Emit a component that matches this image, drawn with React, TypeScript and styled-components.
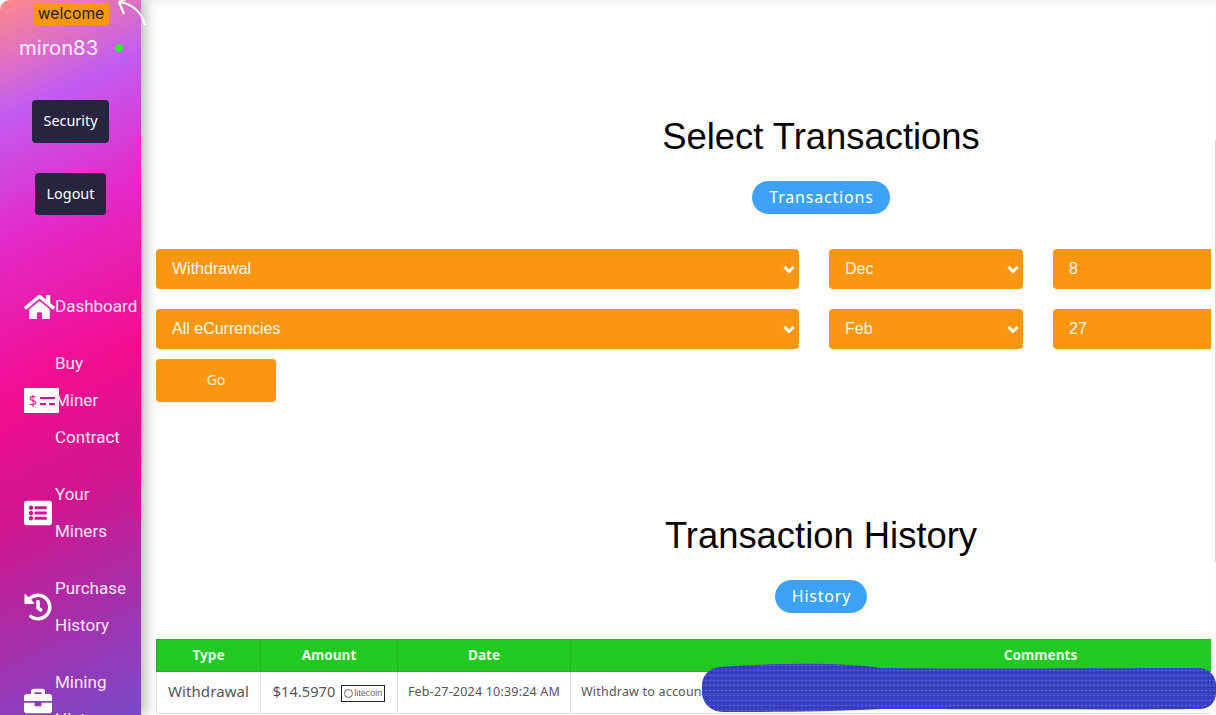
import React from "react";
import styled, { createGlobalStyle } from "styled-components";
import { FaHome, FaListAlt, FaHistory, FaBriefcase } from "react-icons/fa";

const Global = createGlobalStyle`
  html, body {
    margin: 0;
    height: 100%;
    overflow: hidden;
    background: #fff;
  }
  * {
    box-sizing: border-box;
  }
`;

const Page = styled.div`
  position: relative;
  display: flex;
  width: 1216px;
  height: 715px;
  overflow: hidden;
`;

const Sidebar = styled.aside`
  position: relative;
  flex: 0 0 141px;
  height: 715px;
  overflow: hidden;
  border-radius: 10px 0 0 0;
  background: linear-gradient(155deg, #ff8a8a 0%, #c25cf0 15%, #e32ac8 31%, #f20d90 52%, #d0168f 68%, #7a4ac8 100%);
  box-shadow: 4px 0 14px rgba(0, 0, 0, 0.3);
  z-index: 1;
`;

const BackArrow = styled.svg`
  position: absolute;
  left: 116px;
  top: 0;
  z-index: 3;
`;

const Welcome = styled.div`
  width: 76px;
  height: 22px;
  margin: 3px 0 0 33px;
  background: #fb9611;
  border-radius: 2px;
  color: #222;
  font: 15.6px/21px "Inter", sans-serif;
  text-align: center;
`;

const UserRow = styled.div`
  display: flex;
  align-items: center;
  margin: 10px 0 0 19px;
  height: 26px;
  color: #fdeefd;
  font: 20.3px/26px "Inter", sans-serif;
`;

const OnlineDot = styled.span`
  width: 8px;
  height: 8px;
  margin-left: 17px;
  border-radius: 50%;
  background: #2df03a;
`;

const DarkButton = styled.button<{ $w: number; $h: number; $top: number; $lift: number }>`
  display: block;
  width: ${(p) => p.$w}px;
  height: ${(p) => p.$h}px;
  margin: ${(p) => p.$top}px auto 0;
  padding: 0 0 ${(p) => p.$lift}px;
  border: 0;
  border-radius: 4px;
  background: #27243f;
  color: #fff;
  font: 14.4px "Noto Sans", sans-serif;
`;

const Nav = styled.nav`
  display: flex;
  flex-direction: column;
  gap: 20px;
  margin-top: 73px;
  padding-left: 24px;
`;

const NavItem = styled.div`
  display: flex;
  align-items: center;
  color: #fde4f8;
`;

const NavIcon = styled.div`
  flex: 0 0 31px;
  width: 31px;
  display: flex;
  color: #fff;
`;

const NavLabel = styled.div`
  width: 72px;
  font: 17px/37px "Roboto", sans-serif;
`;

const Main = styled.main`
  flex: 1;
  min-width: 0;
  padding: 0 5px 0 15px;
  box-shadow: inset 0 8px 8px -8px rgba(120, 130, 160, 0.22);
`;

const Clip = styled.div`
  width: 1055px;
  height: 715px;
  overflow: hidden;
`;

const Content = styled.div`
  width: 1355px;
`;

const Section = styled.section<{ $top: number }>`
  display: flex;
  flex-direction: column;
  align-items: center;
  width: 1330px;
  margin-top: ${(p) => p.$top}px;
`;

const Title = styled.h2`
  margin: 0;
  color: #000;
  font: 400 36.4px/42px "Liberation Sans", sans-serif;
`;

const Pill = styled.span`
  margin-top: 23px;
  padding: 0 16px 0 17px;
  height: 33px;
  border-radius: 17px;
  background: #3da2f6;
  color: #fff;
  font: 16px/33px "Noto Sans", sans-serif;
  letter-spacing: 0.8px;
`;

const Filters = styled.div`
  display: grid;
  grid-template-columns: 643px 194px 300px;
  gap: 20px 30px;
  margin-top: 35px;
`;

const FilterBox = styled.div`
  position: relative;
  height: 40px;
  padding-left: 16px;
  border-radius: 4px;
  background: #fb9611;
  color: #fff6e6;
  font: 16px/40px "Liberation Sans", sans-serif;
`;

const Chevron = styled.svg`
  position: absolute;
  right: 4px;
  top: 16px;
`;

const GoButton = styled.button`
  display: block;
  width: 120px;
  height: 43px;
  margin-top: 10px;
  padding: 0 0 2px;
  border: 0;
  border-radius: 4px;
  background: #fb9611;
  color: #fff3d8;
  font: 14px "Noto Sans", sans-serif;
`;

const Table = styled.table`
  width: 1355px;
  margin-top: 26px;
  border-collapse: collapse;
  table-layout: fixed;
  font-family: "Noto Sans", sans-serif;
`;

const Th = styled.th`
  height: 32px;
  padding: 0 0 2px;
  background: #22c922;
  border: 1px solid #1fb51f;
  color: #e8fbe4;
  font-size: 13.6px;
  font-weight: 700;
`;

const Td = styled.td<{ $size: number; $left?: boolean }>`
  height: 42px;
  padding: 0 0 ${(p) => (p.$size === 15 ? 4 : 2)}px ${(p) => (p.$left ? 10 : 0)}px;
  border: 1px solid #e2e2e2;
  color: #555;
  font-size: ${(p) => p.$size}px;
  letter-spacing: ${(p) => (p.$size < 14 ? 0.2 : 0.1)}px;
  text-align: ${(p) => (p.$left ? "left" : "center")};
  white-space: nowrap;
  overflow: hidden;
`;

const CoinBadge = styled.span`
  display: inline-flex;
  align-items: center;
  justify-content: center;
  gap: 1px;
  width: 44px;
  height: 17px;
  margin-left: 6px;
  border: 1px solid #222;
  color: #666;
  font: 9px/15px "Liberation Sans", sans-serif;
  letter-spacing: 0;
  vertical-align: middle;
`;

const CoinRing = styled.span`
  width: 9px;
  height: 9px;
  border: 1px solid #666;
  border-radius: 50%;
`;

const Scribble = styled.svg`
  position: absolute;
  left: 701px;
  top: 663px;
  z-index: 2;
`;

const EdgeLine = styled.div`
  position: absolute;
  right: 0;
  top: 140px;
  width: 1px;
  height: 422px;
  background: #d4d4d4;
`;

const Chev = () => (
  <Chevron width="12" height="9" viewBox="0 0 12 9">
    <path d="M1.5 2 L6 6.5 L10.5 2" fill="none" stroke="#fff" strokeWidth="3" />
  </Chevron>
);

const PaymentIcon = () => (
  <svg width="35" height="25" viewBox="0 0 35 25" style={{ flex: "none" }}>
    <rect width="35" height="25" rx="1" fill="#fff" />
    <text x="5" y="18" fontFamily="Noto Sans" fontSize="14" fill="#d0158f">$</text>
    <path d="M16 10h15M16 16h6M25 16h6" stroke="#d0158f" strokeWidth="2" />
  </svg>
);

const App: React.FC = () => {
  return (
    <Page>
      <Global />
      <Sidebar>
        <Welcome>welcome</Welcome>
        <UserRow>
          miron83
          <OnlineDot />
        </UserRow>
        <DarkButton $w={77} $h={43} $top={39} $lift={3}>Security</DarkButton>
        <DarkButton $w={71} $h={42} $top={30} $lift={1}>Logout</DarkButton>
        <Nav>
          <NavItem>
            <NavIcon><FaHome size={32} /></NavIcon>
            <NavLabel>Dashboard</NavLabel>
          </NavItem>
          <NavItem>
            <NavIcon><PaymentIcon /></NavIcon>
            <NavLabel>Buy Miner Contract</NavLabel>
          </NavItem>
          <NavItem>
            <NavIcon><FaListAlt size={28} /></NavIcon>
            <NavLabel>Your Miners</NavLabel>
          </NavItem>
          <NavItem>
            <NavIcon><FaHistory size={28} /></NavIcon>
            <NavLabel>Purchase History</NavLabel>
          </NavItem>
          <NavItem>
            <NavIcon><FaBriefcase size={28} /></NavIcon>
            <NavLabel>Mining History</NavLabel>
          </NavItem>
        </Nav>
      </Sidebar>
      <BackArrow width="32" height="28" viewBox="0 0 32 28">
        <path d="M3 2 C14 3 25 10 29 25 M3 2 L10 -1 M3 2 L8 14" fill="none" stroke="#fff" strokeWidth="2.2" />
      </BackArrow>
      <Main>
        <Clip>
          <Content>
            <Section $top={116}>
              <Title>Select Transactions</Title>
              <Pill>Transactions</Pill>
            </Section>
            <Filters>
              <FilterBox>Withdrawal<Chev /></FilterBox>
              <FilterBox>Dec<Chev /></FilterBox>
              <FilterBox>8<Chev /></FilterBox>
              <FilterBox>All eCurrencies<Chev /></FilterBox>
              <FilterBox>Feb<Chev /></FilterBox>
              <FilterBox>27<Chev /></FilterBox>
            </Filters>
            <GoButton>Go</GoButton>
            <Section $top={113}>
              <Title>Transaction History</Title>
              <Pill>History</Pill>
            </Section>
            <Table>
              <colgroup>
                <col width="104" />
                <col width="137" />
                <col width="173" />
                <col />
              </colgroup>
              <thead>
                <tr>
                  <Th>Type</Th>
                  <Th>Amount</Th>
                  <Th>Date</Th>
                  <Th>Comments</Th>
                </tr>
              </thead>
              <tbody>
                <tr>
                  <Td $size={15}>Withdrawal</Td>
                  <Td $size={14.5}>$14.5970<CoinBadge><CoinRing />litecoin</CoinBadge></Td>
                  <Td $size={12.5}>Feb-27-2024 10:39:24 AM</Td>
                  <Td $size={12.5} $left>Withdraw to account</Td>
                </tr>
              </tbody>
            </Table>
          </Content>
        </Clip>
      </Main>
      <EdgeLine />
      <Scribble width="515" height="52" viewBox="0 0 515 52">
        <defs>
          <pattern id="ink" width="4" height="5" patternUnits="userSpaceOnUse">
            <rect width="4" height="5" fill="#3a41c2" />
            <rect y="2" width="2" height="1" fill="#5a60d8" />
            <rect x="2" y="4" width="2" height="1" fill="#2c33b0" />
          </pattern>
        </defs>
        <path
          d="M18 4 C70 0 140 -1 180 5 C260 6 430 5 498 5 C510 6 516 14 515 26 C516 38 510 46 498 46 C430 47 260 46 180 46 C130 49 60 49 22 49 C6 48 0 36 1 26 C0 14 6 6 18 4 Z"
          fill="url(#ink)"
        />
      </Scribble>
    </Page>
  );
};

export default App;
